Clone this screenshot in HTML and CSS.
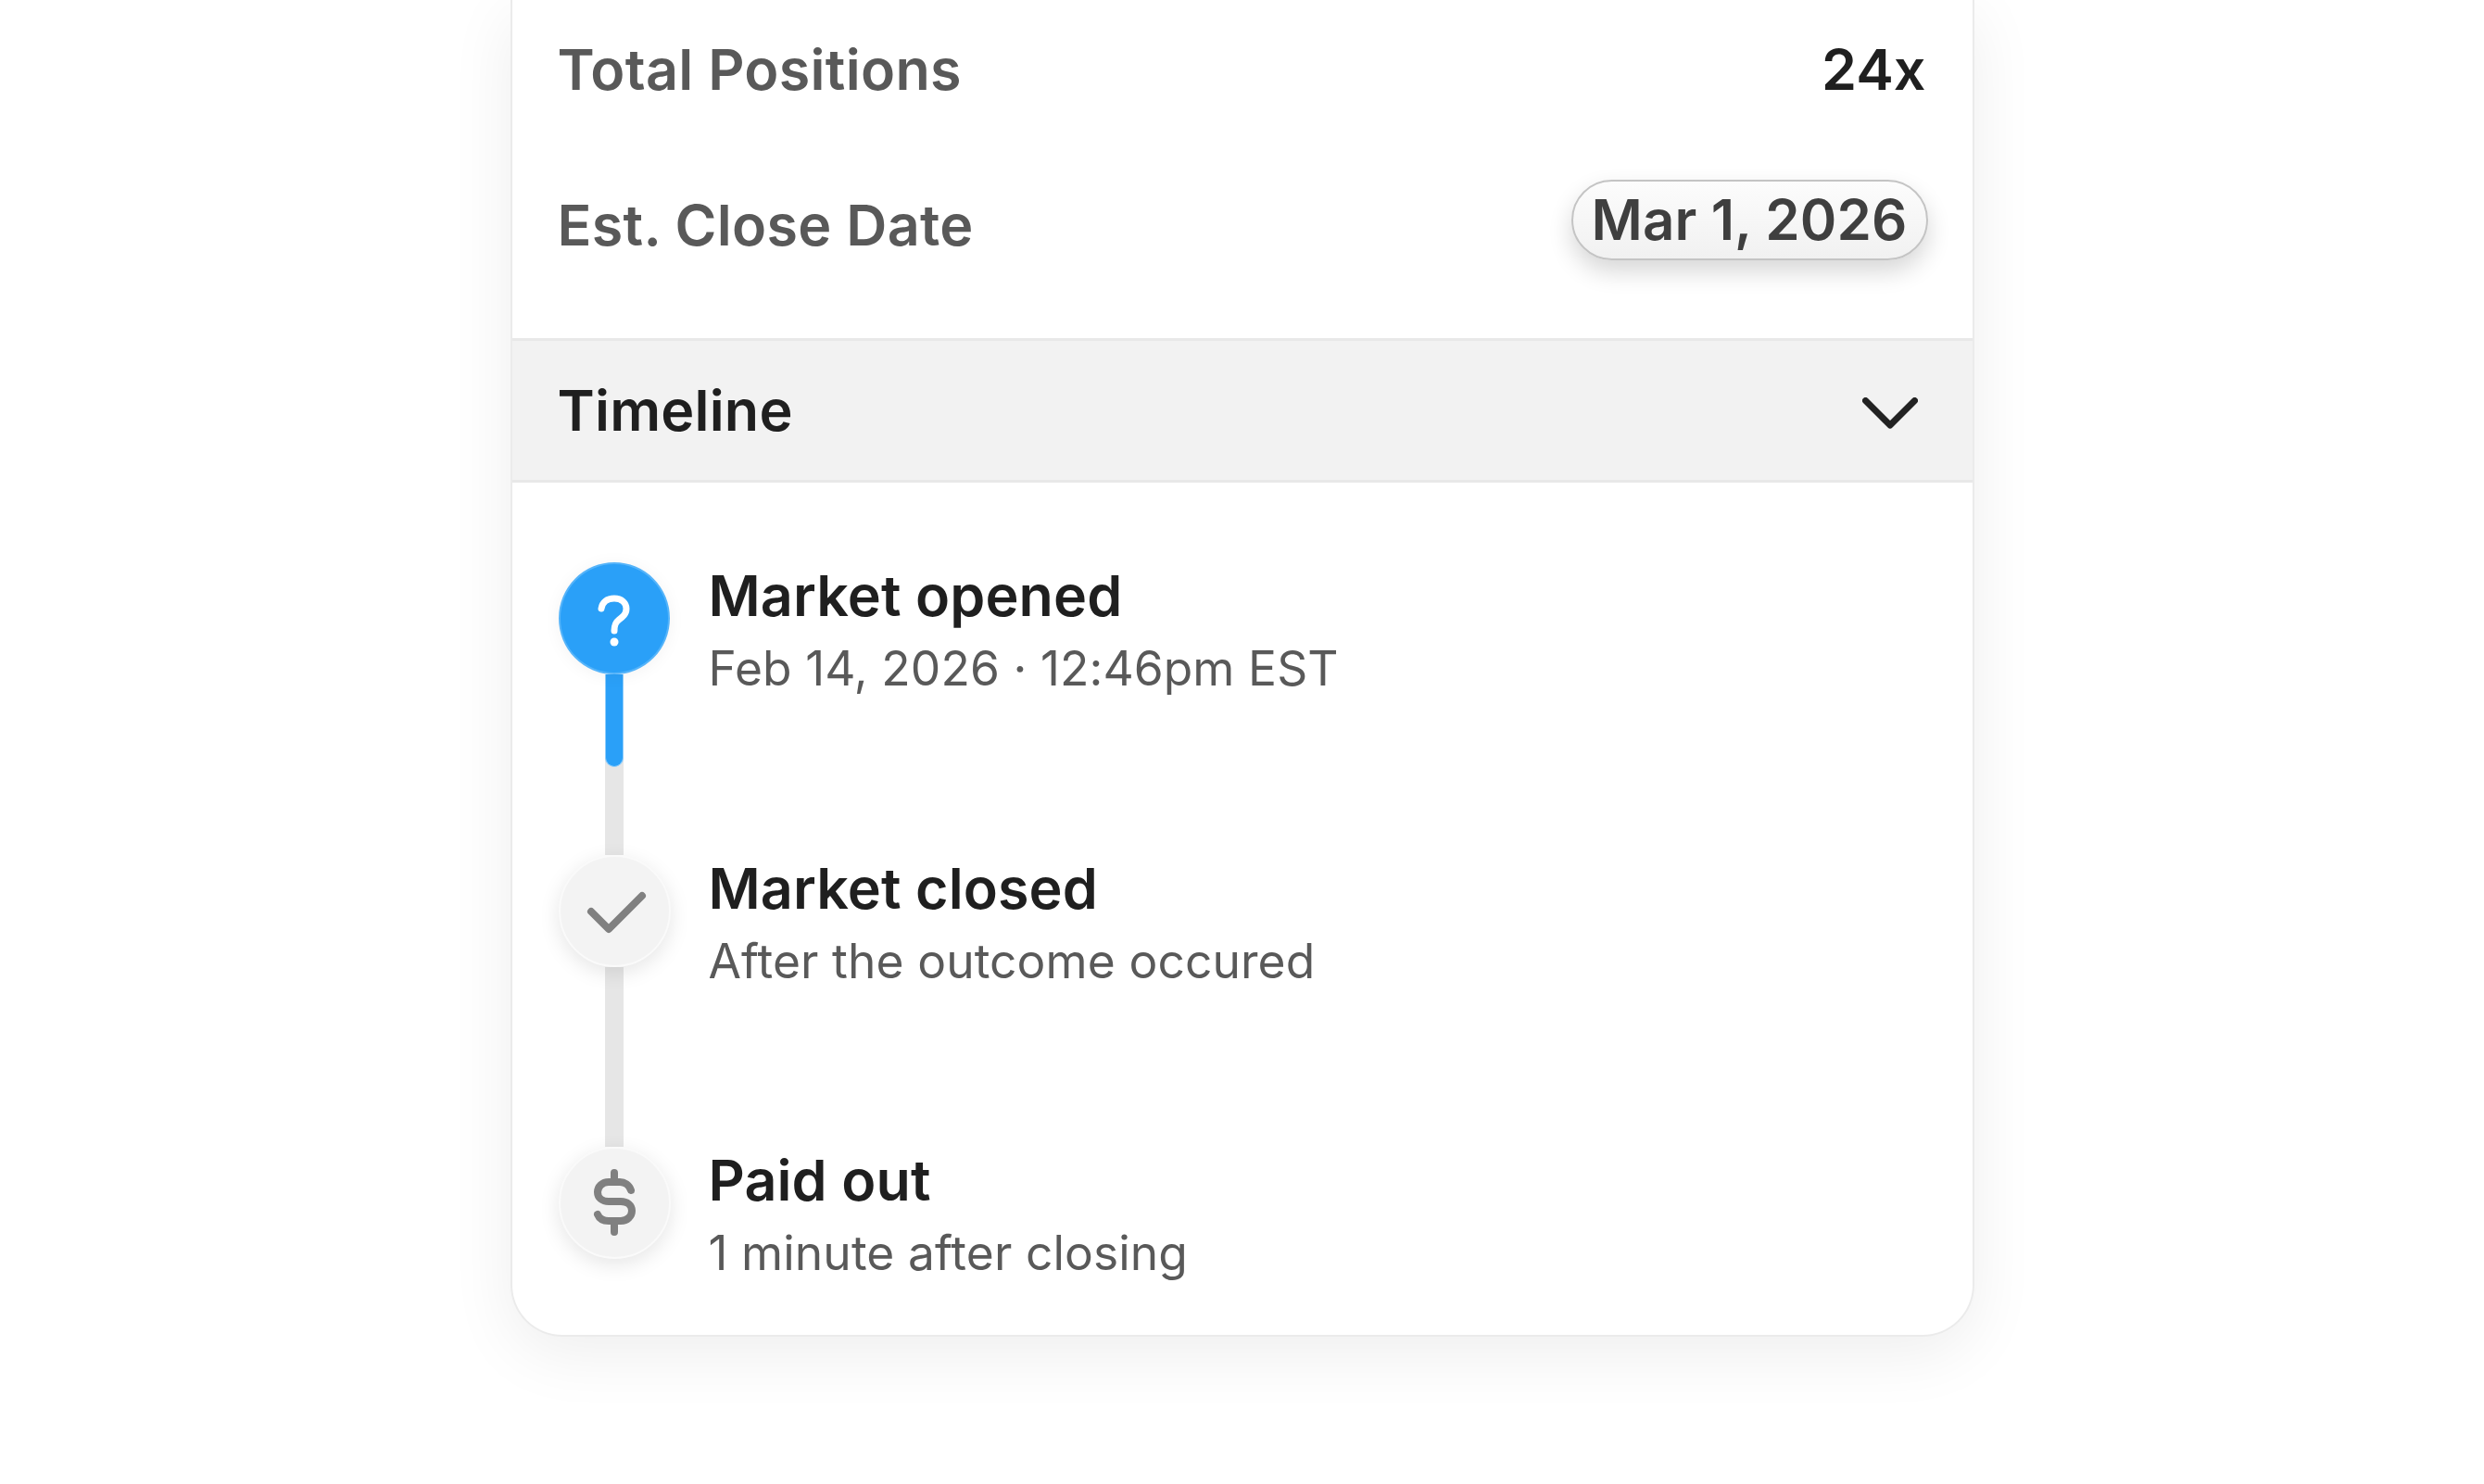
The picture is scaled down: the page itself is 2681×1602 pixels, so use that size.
FILE: index.html
```html
<!DOCTYPE html>
<html lang="en">
<head>
<meta charset="utf-8">
<title>Market timeline</title>
<link rel="stylesheet" href="styles.css">
</head>
<body>
<main class="card">
  <section class="summary">
    <div class="row row-positions">
      <span class="label">Total Positions</span>
      <span class="value">24x</span>
    </div>
    <div class="row row-date">
      <span class="label">Est. Close Date</span>
      <span class="pill">Mar 1, 2026</span>
    </div>
  </section>
  <header class="section-head">
    <h2 class="section-title">Timeline</h2>
    <svg class="chevron" viewBox="0 0 60 34" aria-hidden="true"><path d="M3.500 3.500 L30 30 L56.500 3.500"/></svg>
  </header>
  <ol class="timeline">
    <li class="step">
      <div class="marker">
        <span class="dot dot-active">
          <svg class="glyph" viewBox="0 0 120 120" aria-hidden="true"><path class="glyph-white" d="M46 50 C47 43 52 39 60 39 C68 39 73 44 73 50 C73 56 69 59 65 62 C61 65 60 68 60 74"/><circle class="glyph-dot" cx="60" cy="86" r="4.500"/></svg>
        </span>
        <span class="line"><span class="line-fill"></span></span>
      </div>
      <div class="step-text">
        <div class="step-title">Market opened</div>
        <div class="step-sub">Feb 14, 2026 · 12:46pm EST</div>
      </div>
    </li>
    <li class="step">
      <div class="marker">
        <span class="dot">
          <svg class="glyph" viewBox="0 0 120 120" aria-hidden="true"><path class="glyph-grey" d="M35 61 L54 80 L90 44"/></svg>
        </span>
        <span class="line"></span>
      </div>
      <div class="step-text">
        <div class="step-title">Market closed</div>
        <div class="step-sub">After the outcome occured</div>
      </div>
    </li>
    <li class="step step-last">
      <div class="marker">
        <span class="dot">
          <svg class="glyph" viewBox="0 0 120 120" aria-hidden="true"><path class="glyph-grey" d="M78 47 C76 41 71 38 66 38 H54 C47 38 42 43 42 49 C42 55 47 59 54 59 H67 C74 59 79 63 79 69 C79 75 74 80 67 80 H54 C48 80 44 78 42 73 M60 28 V38 M60 80 V92"/></svg>
        </span>
      </div>
      <div class="step-text">
        <div class="step-title">Paid out</div>
        <div class="step-sub">1 minute after closing</div>
      </div>
    </li>
  </ol>
</main>
</body>
</html>
```
FILE: styles.css
```css
* { box-sizing: border-box; }
html, body { margin: 0; padding: 0; }
body {
  height: 1602px;
  overflow: hidden;
  background: #fff;
  display: flex;
  justify-content: center;
  align-items: flex-start;
  font-family: Inter, "Liberation Sans", sans-serif;
}
.card {
  width: 1580px;
  height: 1443px;
  background: #fff;
  border: 2px solid #ebebeb;
  border-top: 0;
  border-radius: 0 0 56px 56px;
  box-shadow: 0 18px 70px rgba(0, 0, 0, .07);
  display: flex;
  flex-direction: column;
  overflow: visible;
}
.summary { height: 365px; padding: 0 50px 0 49px; }
.row { display: flex; justify-content: space-between; align-items: center; }
.row-positions { height: 150px; }
.row-date { height: 186px; }
.label { font-size: 61px; font-weight: 600; color: #595959; letter-spacing: .3px; }
.value { font-size: 61px; font-weight: 600; color: #1f1f1f; letter-spacing: 0; }
.pill {
  height: 87px;
  width: 385px;
  margin-right: -2px;
  margin-bottom: 12px;
  display: flex;
  align-items: center;
  justify-content: center;
  border: 2px solid #c4c4c4;
  border-radius: 44px;
  background: linear-gradient(#fcfcfc, #f1f1f1);
  box-shadow: 0 12px 26px rgba(0, 0, 0, .16);
  font-size: 60px;
  font-weight: 600;
  letter-spacing: .1px;
  color: #3f3f3f;
  white-space: nowrap;
}
.section-head {
  height: 156px;
  padding: 0 59px 0 49px;
  background: #f2f2f2;
  border-top: 3px solid #e8e8e8;
  border-bottom: 3px solid #e8e8e8;
  display: flex;
  justify-content: space-between;
  align-items: center;
}
.section-title { margin: 0; font-size: 61px; font-weight: 600; color: #1f1f1f; letter-spacing: .2px; }
.chevron { width: 60px; height: 34px; margin-top: 5px; fill: none; stroke: #222; stroke-width: 7; stroke-linecap: round; stroke-linejoin: round; }
.timeline { list-style: none; margin: 0; padding: 86px 0 0 50px; }
.step { height: 315.500px; display: flex; gap: 41px; }
.step-last { height: 122px; }
.marker { width: 121px; display: flex; flex-direction: column; align-items: center; height: 100%; }
.dot {
  flex: none;
  width: 121px;
  height: 121px;
  border-radius: 50%;
  background: #f3f3f3;
  border: 2px solid #fafafa;
  box-shadow: 0 6px 22px rgba(0, 0, 0, .1);
  display: block;
  position: relative;
  z-index: 1;
}
.dot-active { width: 120px; height: 121px; background: #2aa0f8; border-color: #55b4fa; box-shadow: 0 2px 18px rgba(0, 0, 0, .05); }
.glyph { display: block; width: 120px; height: 120px; margin: -2px; fill: none; }
.glyph-white { fill: none; stroke: #fff; stroke-width: 7; stroke-linecap: round; stroke-linejoin: round; }
.glyph-dot { fill: #fff; }
.glyph-grey { fill: none; stroke: #808080; stroke-width: 8; stroke-linecap: round; stroke-linejoin: round; }
.line { flex: 1; width: 20px; background: #e6e6e6; display: block; }
.line-fill { display: block; height: 100px; width: 100%; background: #2aa0f8; border: 1px solid #8fcdfb; border-top: 0; border-radius: 0 0 10px 10px; }
.step-title { font-size: 61px; line-height: 72px; font-weight: 600; color: #1f1f1f; letter-spacing: .1px; white-space: nowrap; }
.step-sub { font-size: 51.500px; line-height: 60px; margin-top: 12px; font-weight: 400; letter-spacing: .08px; color: #595959; white-space: nowrap; }
```
